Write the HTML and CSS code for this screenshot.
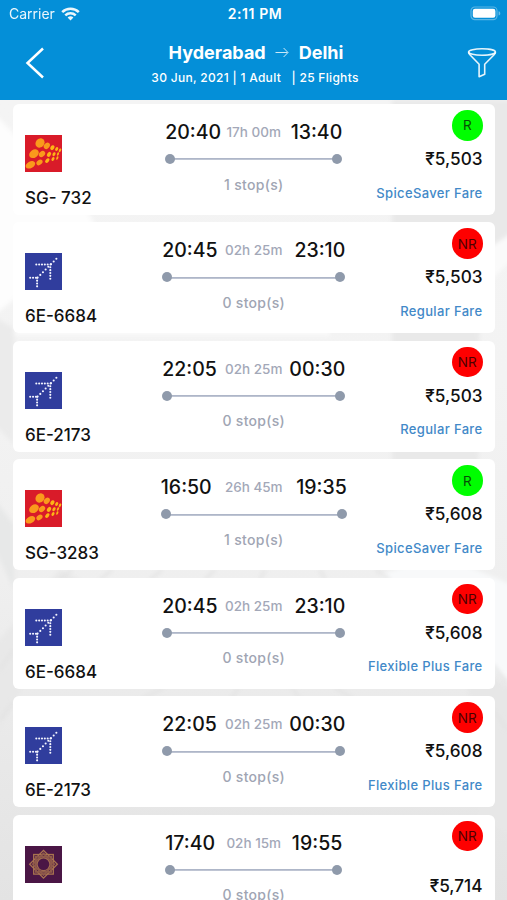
FILE: index.html
```html
<!DOCTYPE html>
<html lang="en">
<head>
  <meta charset="UTF-8" />
  <meta name="viewport" content="width=device-width, initial-scale=1.0"/>
  <title>Hyderabad to Delhi — Flights</title>
  <link rel="stylesheet" href="styles.css">
</head>
<body>

  <!-- airline logos -->
  <svg class="defs" width="0" height="0">
    <symbol id="spicejet" viewBox="0 0 37 37">
      <rect width="37" height="37" fill="#d91b29"/>
      <g fill="#fa9a1c">
        <ellipse cx="15" cy="8" rx="4.9" ry="4.3" transform="rotate(-50 15 8)"/>
        <ellipse cx="21.8" cy="10.8" rx="3.5" ry="2.7" transform="rotate(-50 21.8 10.8)"/>
        <ellipse cx="9" cy="18.7" rx="5.2" ry="3.9" transform="rotate(-35 9 18.7)"/>
        <ellipse cx="17" cy="19" rx="3.5" ry="2.6" transform="rotate(-40 17 19)"/>
        <ellipse cx="5.4" cy="29.8" rx="5.1" ry="3.3" transform="rotate(-28 5.4 29.8)"/>
        <ellipse cx="14.5" cy="27.4" rx="3.4" ry="2.4" transform="rotate(-38 14.5 27.4)"/>
      </g>
      <g fill="#fdb515">
        <ellipse cx="27.4" cy="12.7" rx="2.6" ry="1.9" transform="rotate(-55 27.4 12.7)"/>
        <ellipse cx="31.7" cy="14" rx="2.1" ry="1.4" transform="rotate(-60 31.7 14)"/>
        <ellipse cx="35" cy="15.3" rx="2" ry="1.1" transform="rotate(-65 35 15.3)"/>
        <ellipse cx="24" cy="19.4" rx="2.7" ry="1.8" transform="rotate(-55 24 19.4)"/>
        <ellipse cx="29" cy="19.2" rx="2.1" ry="1.4" transform="rotate(-62 29 19.2)"/>
        <ellipse cx="33" cy="19" rx="1.9" ry="1" transform="rotate(-68 33 19)"/>
        <ellipse cx="22.3" cy="25.6" rx="2.7" ry="1.7" transform="rotate(-48 22.3 25.6)"/>
        <ellipse cx="28" cy="24" rx="2.1" ry="1.3" transform="rotate(-58 28 24)"/>
        <ellipse cx="32.3" cy="23" rx="1.9" ry="1" transform="rotate(-68 32.3 23)"/>
      </g>
    </symbol>
    <symbol id="indigo" viewBox="0 0 37 37">
      <rect width="37" height="37" fill="#303d9d"/>
      <g fill="none" stroke="#f4f5ff" stroke-width="2.1" stroke-linecap="round" stroke-dasharray="0 2.85">
        <path d="M11.3 11.5H26"/>
        <path d="M25.3 14.3V27"/>
        <path d="M5.2 24.8H11.5"/>
        <path d="M12.1 24.8V34"/>
        <path d="M12.6 24.6L31.5 5.6" stroke-dasharray="0 3.8"/>
      </g>
    </symbol>
    <symbol id="vistara" viewBox="0 0 37 37">
      <rect width="37" height="37" fill="#4a1645"/>
      <g fill="none" stroke="#a9744f" stroke-width="1.3">
        <rect x="8.7" y="8.5" width="19.6" height="19.6"/>
        <rect x="8.7" y="8.5" width="19.6" height="19.6" transform="rotate(45 18.5 18.3)"/>
      </g>
      <g fill="none" stroke="#8f5a4a" stroke-width="1.8">
        <rect x="10.9" y="10.7" width="15.2" height="15.2"/>
        <rect x="10.9" y="10.7" width="15.2" height="15.2" transform="rotate(45 18.5 18.3)"/>
      </g>
      <circle cx="18.5" cy="18.3" r="6.4" fill="none" stroke="#a06a50" stroke-width="1.2"/>
    </symbol>
  </svg>

  <header class="header">
    <div class="status-bar">
      <span class="carrier">Carrier
        <svg class="wifi" viewBox="0 0 19 14" fill="none" stroke="#fff" stroke-width="2.5">
          <path d="M1.2 5.1a11.8 11.8 0 0 1 16.6 0"/>
          <path d="M4.3 8.4a7.4 7.4 0 0 1 10.4 0"/>
          <path d="M9.5 13.6L6.6 10.6a4.1 4.1 0 0 1 5.8 0z" fill="#fff" stroke="none"/>
        </svg>
      </span>
      <span class="clock">2:11 PM</span>
      <svg class="battery" viewBox="0 0 31 15">
        <rect x="1" y="1" width="26" height="12.6" rx="3.8" fill="none" stroke="#fff" stroke-opacity=".35" stroke-width="1.2"/>
        <rect x="2.8" y="2.8" width="22.6" height="9" rx="2.2" fill="#fff"/>
        <path d="M28.6 5.2v4.4c1.2-.4 1.7-1.2 1.7-2.2s-.5-1.8-1.7-2.2z" fill="#fff" fill-opacity=".4"/>
      </svg>
    </div>
    <nav class="nav-bar">
      <svg class="back" viewBox="0 0 20 32" fill="none" stroke="#fff" stroke-width="2.5">
        <path d="M18 1.5L2.5 16 18 30.5"/>
      </svg>
      <div class="route">
        <h1>Hyderabad
          <svg class="arrow" viewBox="0 0 14 11" fill="none" stroke="#fff" stroke-opacity=".8" stroke-width="1">
            <path d="M.5 5.5h12M8.6 1l4.4 4.5L8.6 10"/>
          </svg>
          Delhi</h1>
        <p>30 Jun, 2021 | 1 Adult &nbsp; | 25 Flights</p>
      </div>
      <svg class="filter" viewBox="0 0 30 32" fill="none" stroke="#fff" stroke-opacity=".9" stroke-width="1.6" stroke-linejoin="round">
        <ellipse cx="15" cy="5" rx="13.4" ry="3.2"/>
        <path d="M1.6 5.2c0 1 .5 1.8 1.3 2.6l9.2 9.4v12.6l5.6-2.6v-10l9.4-9.4c.8-.8 1.3-1.6 1.3-2.6"/>
      </svg>
    </nav>
  </header>

  <main class="results">
    <!-- faint terminal building behind the list -->
    <svg class="backdrop" viewBox="0 0 507 801" preserveAspectRatio="none">
      <defs>
        <linearGradient id="haze" x1="0" y1="0" x2="0" y2="1">
          <stop offset="0" stop-color="#f4f4f4"/>
          <stop offset=".35" stop-color="#f3f3f3"/>
          <stop offset=".6" stop-color="#efefef"/>
          <stop offset="1" stop-color="#e3e3e3"/>
        </linearGradient>
        <filter id="soft"><feGaussianBlur stdDeviation="2"/></filter>
      </defs>
      <rect width="507" height="801" fill="url(#haze)"/>
      <g filter="url(#soft)">
        <path d="M-5 14L88 112 98 132-5 215z" fill="#fdfdfd"/>
        <path d="M392 0H512V142L480 150 478 450H392z" fill="#e9e9e9"/>
        <path d="M512 133L470 160 480 190 512 160z" fill="#fafafa"/>
        <path d="M-5 218L14 228V345L-5 325z" fill="#ebebeb"/>
        <path d="M14 228H330V236H14z" fill="#fafafa"/>
        <path d="M-5 400L14 425V490L-5 450z" fill="#e7e8e8"/>
        <path d="M512 485L440 455 380 475 512 585z" fill="#f8f9fa"/>
        <path d="M-5 545L60 470 80 480-5 640z" fill="#e8e8e8"/>
        <path d="M512 590L465 560 480 720 512 735z" fill="#e7e7e7"/>
      </g>
      <g fill="none" stroke="#e2e2e2" stroke-width="2.5" filter="url(#soft)">
        <path d="M60 480L72 470M100 480l12-10M150 480l12-10M205 480l10-10M260 480l5-10M325 480l-5-10M390 480l-14-10"/>
        <path d="M0 570L14 550M0 620L14 602M493 565l14 18M493 610l14 20"/>
        <path d="M140 600l24-12M230 600l9-12M300 600l-8-12M355 600l-20-12"/>
      </g>
    </svg>

    <div class="flight">
      <div class="airline">
        <svg class="logo"><use href="#spicejet"/></svg>
        <span class="number">SG- 732</span>
      </div>
      <div class="trip trip-short">
        <div class="times"><b>20:40</b><span class="duration">17h 00m</span><b>13:40</b></div>
        <div class="track"></div>
        <span class="stops">1 stop(s)</span>
      </div>
      <div class="fare">
        <span class="badge refundable">R</span>
        <span class="price">₹5,503</span>
        <span class="fare-type">SpiceSaver Fare</span>
      </div>
    </div>

    <div class="flight">
      <div class="airline">
        <svg class="logo"><use href="#indigo"/></svg>
        <span class="number">6E-6684</span>
      </div>
      <div class="trip">
        <div class="times"><b>20:45</b><span class="duration">02h 25m</span><b>23:10</b></div>
        <div class="track"></div>
        <span class="stops">0 stop(s)</span>
      </div>
      <div class="fare">
        <span class="badge">NR</span>
        <span class="price">₹5,503</span>
        <span class="fare-type">Regular Fare</span>
      </div>
    </div>

    <div class="flight">
      <div class="airline">
        <svg class="logo"><use href="#indigo"/></svg>
        <span class="number">6E-2173</span>
      </div>
      <div class="trip">
        <div class="times"><b>22:05</b><span class="duration">02h 25m</span><b>00:30</b></div>
        <div class="track"></div>
        <span class="stops">0 stop(s)</span>
      </div>
      <div class="fare">
        <span class="badge">NR</span>
        <span class="price">₹5,503</span>
        <span class="fare-type">Regular Fare</span>
      </div>
    </div>

    <div class="flight">
      <div class="airline">
        <svg class="logo"><use href="#spicejet"/></svg>
        <span class="number">SG-3283</span>
      </div>
      <div class="trip trip-long">
        <div class="times"><b>16:50</b><span class="duration">26h 45m</span><b>19:35</b></div>
        <div class="track"></div>
        <span class="stops">1 stop(s)</span>
      </div>
      <div class="fare">
        <span class="badge refundable">R</span>
        <span class="price">₹5,608</span>
        <span class="fare-type">SpiceSaver Fare</span>
      </div>
    </div>

    <div class="flight">
      <div class="airline">
        <svg class="logo"><use href="#indigo"/></svg>
        <span class="number">6E-6684</span>
      </div>
      <div class="trip">
        <div class="times"><b>20:45</b><span class="duration">02h 25m</span><b>23:10</b></div>
        <div class="track"></div>
        <span class="stops">0 stop(s)</span>
      </div>
      <div class="fare">
        <span class="badge">NR</span>
        <span class="price">₹5,608</span>
        <span class="fare-type">Flexible Plus Fare</span>
      </div>
    </div>

    <div class="flight">
      <div class="airline">
        <svg class="logo"><use href="#indigo"/></svg>
        <span class="number">6E-2173</span>
      </div>
      <div class="trip">
        <div class="times"><b>22:05</b><span class="duration">02h 25m</span><b>00:30</b></div>
        <div class="track"></div>
        <span class="stops">0 stop(s)</span>
      </div>
      <div class="fare">
        <span class="badge">NR</span>
        <span class="price">₹5,608</span>
        <span class="fare-type">Flexible Plus Fare</span>
      </div>
    </div>

    <div class="flight">
      <div class="airline">
        <svg class="logo"><use href="#vistara"/></svg>
      </div>
      <div class="trip trip-short">
        <div class="times"><b>17:40</b><span class="duration">02h 15m</span><b>19:55</b></div>
        <div class="track"></div>
        <span class="stops">0 stop(s)</span>
      </div>
      <div class="fare no-type">
        <span class="badge">NR</span>
        <span class="price">₹5,714</span>
      </div>
    </div>
  </main>

</body>
</html>
```

FILE: styles.css
```css
* {
  box-sizing: border-box;
}

body {
  margin: 0;
  height: 900px;
  display: flex;
  flex-direction: column;
  overflow: hidden;
  font-family: Inter, "Liberation Sans", sans-serif;
  background-color: #f2f2f2;
  color: #111;
}

.defs {
  position: absolute;
}

.header {
  flex: none;
  height: 99.5px;
  background-color: #048fd8;
  color: white;
}

.status-bar {
  display: grid;
  grid-template-columns: 1fr auto 1fr;
  align-items: center;
  height: 27px;
  padding: 0 6px 0 9px;
  font-size: 14px;
}

.carrier {
  display: flex;
  align-items: center;
  gap: 6px;
  opacity: 0.92;
}

.wifi {
  width: 19px;
  height: 14px;
}

.clock {
  font-size: 14px;
  font-weight: 600;
  letter-spacing: 0.6px;
}

.battery {
  justify-self: end;
  width: 31px;
  height: 15px;
}

.nav-bar {
  display: flex;
  align-items: center;
  justify-content: space-between;
  height: 72.5px;
  padding: 0 10px 0 25px;
}

.back {
  width: 20px;
  height: 32px;
}

.route {
  text-align: center;
}

.route h1 {
  display: flex;
  align-items: center;
  justify-content: center;
  gap: 9.5px;
  margin: 0;
  font-size: 18px;
  font-weight: 700;
  line-height: 24px;
}

.arrow {
  width: 14px;
  height: 11px;
}

.route p {
  margin: 5px 2px 0 0;
  font-size: 12px;
  font-weight: 500;
  line-height: 16px;
  letter-spacing: 0.3px;
}

.filter {
  width: 30px;
  height: 32px;
}

.results {
  position: relative;
  flex: 1;
  display: flex;
  flex-direction: column;
  gap: 7.8px;
  min-height: 0;
  padding: 4.5px 12.5px 0 13px;
  overflow: hidden;
}

.backdrop {
  position: absolute;
  top: 0;
  left: 0;
  width: 100%;
  height: 100%;
}

.flight {
  position: relative;
  flex: none;
  display: grid;
  grid-template-columns: 1fr auto 1fr;
  height: 110.7px;
  padding: 0 12px;
  border-radius: 6px;
  background-color: white;
}

.airline {
  display: flex;
  flex-direction: column;
  gap: 16px;
  padding-top: 31px;
}

.logo {
  width: 37px;
  height: 37px;
}

.number {
  font-size: 17px;
  font-weight: 500;
  line-height: 20px;
}

.trip {
  width: 183px;
  padding-top: 16px;
  text-align: center;
}

.trip-short {
  width: 177px;
}

.trip-long {
  width: 186px;
}

.times {
  display: grid;
  grid-template-columns: 1fr auto 1fr;
  align-items: center;
  line-height: 24px;
}

.times b {
  font-size: 19.5px;
  font-weight: 500;
  text-align: left;
}

.times b:last-child {
  text-align: right;
}

.duration {
  font-size: 13.5px;
  font-weight: 500;
  color: #a3a8b8;
}

/* line with a dot at each end */
.track {
  display: flex;
  align-items: center;
  justify-content: space-between;
  height: 10px;
  margin-top: 10px;
  background: linear-gradient(#aeb6c8, #aeb6c8) center / calc(100% - 10px) 1.8px no-repeat;
}

.track::before,
.track::after {
  content: "";
  width: 10px;
  height: 10px;
  border-radius: 50%;
  background-color: #8f9aab;
}

.stops {
  display: block;
  margin-top: 10.5px;
  font-size: 14px;
  font-weight: 500;
  line-height: 20px;
  letter-spacing: 0.3px;
  color: #a0a5b3;
}

.fare {
  display: flex;
  flex-direction: column;
  align-items: flex-end;
  padding-top: 6px;
}

.badge {
  display: flex;
  align-items: center;
  justify-content: center;
  width: 30.5px;
  height: 30.5px;
  border-radius: 50%;
  background-color: #fe0000;
  color: #4d0000;
  font-size: 13.5px;
}

.badge.refundable {
  background-color: #00fe00;
  color: #064d06;
}

.price {
  margin-top: 8.5px;
  font-size: 17.2px;
  font-weight: 500;
  line-height: 20px;
}

.no-type .price {
  margin-top: 24.5px;
}

.fare-type {
  margin-top: 15.5px;
  font-size: 13px;
  font-weight: 500;
  line-height: 16px;
  letter-spacing: 0.35px;
  color: #4289c8;
}
```
